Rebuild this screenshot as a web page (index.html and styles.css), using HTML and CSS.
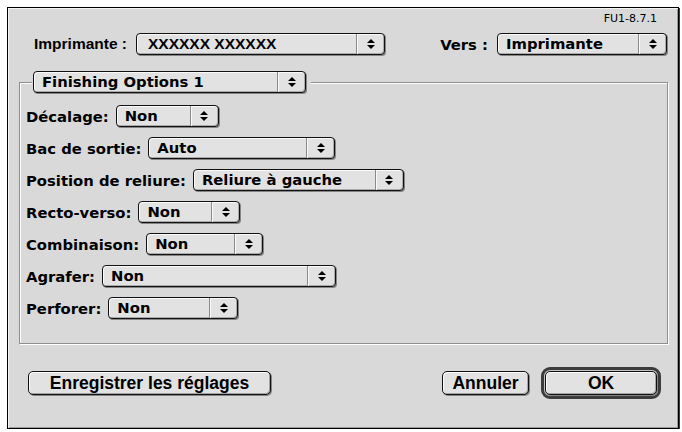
FILE: index.html
```html
<!DOCTYPE html>
<html lang="fr">
<head>
    <meta charset="UTF-8">
    <title>Finishing Options</title>
    <link rel="stylesheet" href="styles.css">
</head>
<body>
    <div class="dialog">
        <div class="version">FU1-8.7.1</div>

        <div class="top-row">
            <span class="label narrow label-printer">Imprimante :</span>
            <div class="popup popup-printer">
                <span class="popup-text narrow">XXXXXX XXXXXX</span>
                <span class="popup-arrow"><svg viewBox="0 0 8 12" width="8" height="12"><path d="M0 5 L4 1 L8 5 Z M0 7 L8 7 L4 11 Z"/></svg></span>
            </div>
            <span class="label label-dest">Vers :</span>
            <div class="popup popup-dest">
                <span class="popup-text">Imprimante</span>
                <span class="popup-arrow"><svg viewBox="0 0 8 12" width="8" height="12"><path d="M0 5 L4 1 L8 5 Z M0 7 L8 7 L4 11 Z"/></svg></span>
            </div>
        </div>

        <fieldset class="group">
            <legend class="group-title">
                <div class="popup popup-panel">
                    <span class="popup-text">Finishing Options 1</span>
                    <span class="popup-arrow"><svg viewBox="0 0 8 12" width="8" height="12"><path d="M0 5 L4 1 L8 5 Z M0 7 L8 7 L4 11 Z"/></svg></span>
                </div>
            </legend>

            <div class="fields">
                <div class="field">
                    <span class="label">Décalage:</span>
                    <div class="popup popup-offset">
                        <span class="popup-text">Non</span>
                        <span class="popup-arrow"><svg viewBox="0 0 8 12" width="8" height="12"><path d="M0 5 L4 1 L8 5 Z M0 7 L8 7 L4 11 Z"/></svg></span>
                    </div>
                </div>
                <div class="field">
                    <span class="label">Bac de sortie:</span>
                    <div class="popup popup-tray">
                        <span class="popup-text">Auto</span>
                        <span class="popup-arrow"><svg viewBox="0 0 8 12" width="8" height="12"><path d="M0 5 L4 1 L8 5 Z M0 7 L8 7 L4 11 Z"/></svg></span>
                    </div>
                </div>
                <div class="field">
                    <span class="label">Position de reliure:</span>
                    <div class="popup popup-binding">
                        <span class="popup-text">Reliure à gauche</span>
                        <span class="popup-arrow"><svg viewBox="0 0 8 12" width="8" height="12"><path d="M0 5 L4 1 L8 5 Z M0 7 L8 7 L4 11 Z"/></svg></span>
                    </div>
                </div>
                <div class="field">
                    <span class="label">Recto-verso:</span>
                    <div class="popup popup-duplex">
                        <span class="popup-text">Non</span>
                        <span class="popup-arrow"><svg viewBox="0 0 8 12" width="8" height="12"><path d="M0 5 L4 1 L8 5 Z M0 7 L8 7 L4 11 Z"/></svg></span>
                    </div>
                </div>
                <div class="field">
                    <span class="label">Combinaison:</span>
                    <div class="popup popup-combine">
                        <span class="popup-text">Non</span>
                        <span class="popup-arrow"><svg viewBox="0 0 8 12" width="8" height="12"><path d="M0 5 L4 1 L8 5 Z M0 7 L8 7 L4 11 Z"/></svg></span>
                    </div>
                </div>
                <div class="field">
                    <span class="label">Agrafer:</span>
                    <div class="popup popup-staple">
                        <span class="popup-text">Non</span>
                        <span class="popup-arrow"><svg viewBox="0 0 8 12" width="8" height="12"><path d="M0 5 L4 1 L8 5 Z M0 7 L8 7 L4 11 Z"/></svg></span>
                    </div>
                </div>
                <div class="field">
                    <span class="label">Perforer:</span>
                    <div class="popup popup-punch">
                        <span class="popup-text">Non</span>
                        <span class="popup-arrow"><svg viewBox="0 0 8 12" width="8" height="12"><path d="M0 5 L4 1 L8 5 Z M0 7 L8 7 L4 11 Z"/></svg></span>
                    </div>
                </div>
            </div>
        </fieldset>

        <div class="actions">
            <button class="btn btn-save">Enregistrer les réglages</button>
            <button class="btn btn-cancel">Annuler</button>
            <div class="default-ring">
                <button class="btn btn-ok">OK</button>
            </div>
        </div>
    </div>
</body>
</html>
```

FILE: styles.css
```css
:root {
    --face: #d9d9d9;
    --control: #e2e2e2;
    --edge: #111;
    --etch: #8e8e8e;
}
body {
    margin: 0;
    background: #fff;
    color: #000;
    font-family: "DejaVu Sans", "Liberation Sans", sans-serif;
}
.dialog {
    box-sizing: border-box;
    width: 672px;
    height: 422px;
    margin: 7px 0 0 7px;
    background: var(--face);
    border: 1px solid #000;
    box-shadow: inset 1px 1px 0 #f4f4f4, inset -1px -1px 0 #9c9c9c, 1px 1px 0 #3a3a3a;
    display: flex;
    flex-direction: column;
}
.version {
    height: 24px;
    line-height: 22px;
    text-align: right;
    padding-right: 21px;
    padding-bottom: 1px;
    font-size: 11px;
}
.label {
    font-weight: bold;
    font-size: 14.8px;
    white-space: nowrap;
}
.narrow {
    font-family: "Liberation Sans", Arial, sans-serif;
}
.top-row {
    display: flex;
    align-items: center;
    padding: 0 11px 0 26px;
}
.label-printer {
    font-size: 15.5px;
    margin-right: 9px;
}
.label-dest {
    margin-left: auto;
    margin-right: 9px;
}

/* popup menus */
.popup {
    box-sizing: border-box;
    height: 22px;
    display: flex;
    background: var(--control);
    border: 1px solid var(--edge);
    border-radius: 4px;
    box-shadow: inset 1px 1px 0 #fafafa, inset -1px -1px 0 #ababab, 1px 1px 0 #858585;
}
.popup-text {
    flex: 1;
    padding-left: 8px;
    font-weight: bold;
    font-size: 14.8px;
    line-height: 20px;
    white-space: nowrap;
    overflow: hidden;
}
.popup-text.narrow {
    font-size: 15.5px;
    padding-left: 11px;
}
.popup-arrow {
    width: 27px;
    display: flex;
    align-items: center;
    justify-content: center;
    border-left: 1px solid #8a8a8a;
    box-shadow: inset 1px 0 0 #fafafa;
}
.popup-arrow svg {
    fill: #000;
}
.popup-printer { width: 249px; }
.popup-dest { width: 170px; }
.popup-panel { width: 273px; }
.popup-offset { width: 103px; }
.popup-tray { width: 187px; }
.popup-binding { width: 211px; }
.popup-duplex { width: 102px; }
.popup-combine { width: 117px; }
.popup-staple { width: 234px; }
.popup-punch { width: 130px; }

/* group box */
.group {
    margin: 16px 10px 0 11px;
    padding: 12px 0 24px 6px;
    border: 1px solid var(--etch);
    box-shadow: inset 1px 1px 0 #fff, 1px 1px 0 #fff;
    min-width: 0;
}
.group-title {
    margin-left: 6px;
    padding: 0 5px 0 1px;
    background: var(--face);
}
.fields {
    display: flex;
    flex-direction: column;
    gap: 10px;
}
.field {
    display: flex;
    align-items: center;
    gap: 7px;
}

/* push buttons */
.actions {
    display: flex;
    align-items: center;
    margin-top: 23px;
    padding: 0 17px 0 20px;
}
.btn {
    box-sizing: border-box;
    height: 24px;
    padding: 0;
    background: var(--control);
    border: 1px solid var(--edge);
    border-radius: 5px;
    box-shadow: inset 1px 1px 0 #fafafa, inset -1px -1px 0 #a4a4a4, 1px 1px 0 #858585;
    color: #000;
    font-family: "Liberation Sans", Arial, sans-serif;
    font-weight: bold;
    font-size: 17.5px;
    line-height: 20px;
}
.btn-save { width: 243px; }
.btn-cancel {
    width: 87px;
    margin-left: auto;
}
.default-ring {
    margin-left: 12px;
    padding: 1px;
    border: 3px solid #3c3c3c;
    border-radius: 9px;
    background: #c4c4c4;
    display: flex;
}
.btn-ok { width: 112px; }
```
